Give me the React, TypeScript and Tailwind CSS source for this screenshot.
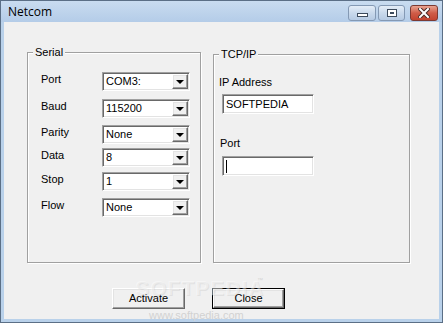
import React from "react";

const sunken =
  "border border-t-[#a0a0a0] border-l-[#a0a0a0] border-b-white border-r-white shadow-[inset_1px_1px_0_#696969,inset_-1px_-1px_0_#e3e3e3]";
const raised =
  "border border-t-white border-l-white border-b-[#696969] border-r-[#696969] shadow-[inset_-1px_-1px_0_#a0a0a0,inset_1px_1px_0_#e3e3e3]";

const serialRows = [
  { label: "Port", value: "COM3:", mt: "mt-[19px]" },
  { label: "Baud", value: "115200", mt: "mt-[8px]" },
  { label: "Parity", value: "None", mt: "mt-[7px]" },
  { label: "Data", value: "8", mt: "mt-[4px]" },
  { label: "Stop", value: "1", mt: "mt-[5px]" },
  { label: "Flow", value: "None", mt: "mt-[7px]" },
];

function Combo({ value }: { value: string }) {
  return (
    <div className={`w-[88px] h-[19px] bg-white flex items-stretch p-[1px] ${sunken}`}>
      <div className="flex-1 flex items-center pl-[2px] text-black leading-none">{value}</div>
      <div className={`w-[16px] bg-[#f0f0f0] flex items-center justify-center ${raised}`}>
        <div className="w-0 h-0 border-x-[4px] border-x-transparent border-t-[4px] border-t-black" />
      </div>
    </div>
  );
}

function GroupBox({ title, className, children }: { title: string; className: string; children: React.ReactNode }) {
  return (
    <div
      className={`relative border border-[#a0a0a0] shadow-[1px_1px_0_#ffffff,inset_1px_1px_0_#ffffff] ${className}`}
    >
      <span className="absolute -top-[8px] left-[5px] bg-[#f0f0f0] px-[2px] leading-[14px]">{title}</span>
      {children}
    </div>
  );
}

function TitleButton({ kind }: { kind: "min" | "max" | "close" }) {
  if (kind === "close") {
    return (
      <div className="w-[28px] h-[16px] rounded-[3px] border border-[#7b3a33] bg-gradient-to-b from-[#e8a392] via-[#cf5c48] to-[#c3432f] flex items-center justify-center">
        <svg width="12" height="10" viewBox="0 0 12 10">
          <path d="M2 1 L10 9 M10 1 L2 9" stroke="#4a2a26" strokeWidth="4" strokeLinecap="square" />
          <path d="M2 1 L10 9 M10 1 L2 9" stroke="#ffffff" strokeWidth="2" strokeLinecap="square" />
        </svg>
      </div>
    );
  }
  return (
    <div
      className={`${kind === "min" ? "w-[28px]" : "w-[27px]"} h-[16px] rounded-[3px] border border-[#8499b4] bg-gradient-to-b from-[#e4edf7] via-[#c9d9ec] to-[#b6cae3] flex items-center justify-center`}
    >
      {kind === "min" ? (
        <div className="mt-[5px] w-[11px] h-[4px] bg-white border border-[#3c4a5c]" />
      ) : (
        <div className="w-[10px] h-[8px] bg-white border border-[#3c4a5c] flex items-center justify-center">
          <div className="w-[4px] h-[2px] border border-[#3c4a5c]" />
        </div>
      )}
    </div>
  );
}

export default function App() {
  return (
    <div
      className="w-[443px] h-[323px] bg-[#b9d1ea] border border-[#5b6f86] flex flex-col relative overflow-hidden text-[11px] text-black"
      style={{ fontFamily: '"Liberation Sans", Arial, sans-serif' }}
    >
      {/* title bar */}
      <div className="h-[21px] flex items-center justify-between pl-[7px] pr-[4px] bg-gradient-to-b from-[#c9dcf0] to-[#b4cce8]">
        <span className="text-[12px] text-black" style={{ fontFamily: '"Open Sans", "Liberation Sans", sans-serif' }}>
          Netcom
        </span>
        <div className="flex items-start gap-[2px] pt-[2px]">
          <TitleButton kind="min" />
          <TitleButton kind="max" />
          <div className="w-[1px]" />
          <TitleButton kind="close" />
        </div>
      </div>

      {/* client area */}
      <div className="mx-[3px] mb-[3px] flex-1 bg-[#f0f0f0] flex flex-col pl-[23px] pt-[30px]">
        <div className="flex items-start gap-[12px]">
          <GroupBox title="Serial" className="w-[174px] h-[211px] pl-[13px]">
            {serialRows.map((r) => (
              <div key={r.label} className={`flex items-start ${r.mt}`}>
                <span className="w-[61px] pt-[1px] leading-[13px]">{r.label}</span>
                <Combo value={r.value} />
              </div>
            ))}
          </GroupBox>

          <GroupBox title="TCP/IP" className="mt-[2px] w-[197px] h-[209px] pl-[5px]">
            <div className="mt-[21px] leading-[13px]">IP Address</div>
            <div className={`mt-[5px] ml-[3px] w-[92px] h-[20px] bg-white flex items-center pl-[3px] ${sunken}`}>
              SOFTPEDIA
            </div>
            <div className="mt-[23px] ml-[1px] leading-[13px]">Port</div>
            <div className={`mt-[6px] ml-[3px] w-[92px] h-[20px] bg-white flex items-center pl-[3px] ${sunken}`}>
              <div className="w-[1px] h-[13px] bg-black" />
            </div>
          </GroupBox>
        </div>

        <div className="mt-[25px] ml-[85px] flex gap-[27px]">
          <button className={`w-[73px] h-[21px] bg-[#f0f0f0] flex items-center justify-center ${raised}`}>
            Activate
          </button>
          <div className="w-[73px] h-[21px] border border-black">
            <button className={`w-full h-full bg-[#f0f0f0] flex items-center justify-center ${raised}`}>Close</button>
          </div>
        </div>
      </div>

      {/* watermark */}
      <div className="absolute left-[134px] top-[276px] pointer-events-none text-[21px] leading-none font-bold tracking-[1px] text-white/40 [text-shadow:1px_1px_0_rgba(180,180,180,0.25)]">
        SOFTPEDIA
      </div>
      <div className="absolute left-[256px] top-[276px] pointer-events-none text-[6px] leading-none text-[#d4d4d4]">™</div>
      <div className="absolute left-[148px] top-[309px] pointer-events-none text-[11px] leading-none text-[#d2d2d2]">
        www.softpedia.com
      </div>
    </div>
  );
}
